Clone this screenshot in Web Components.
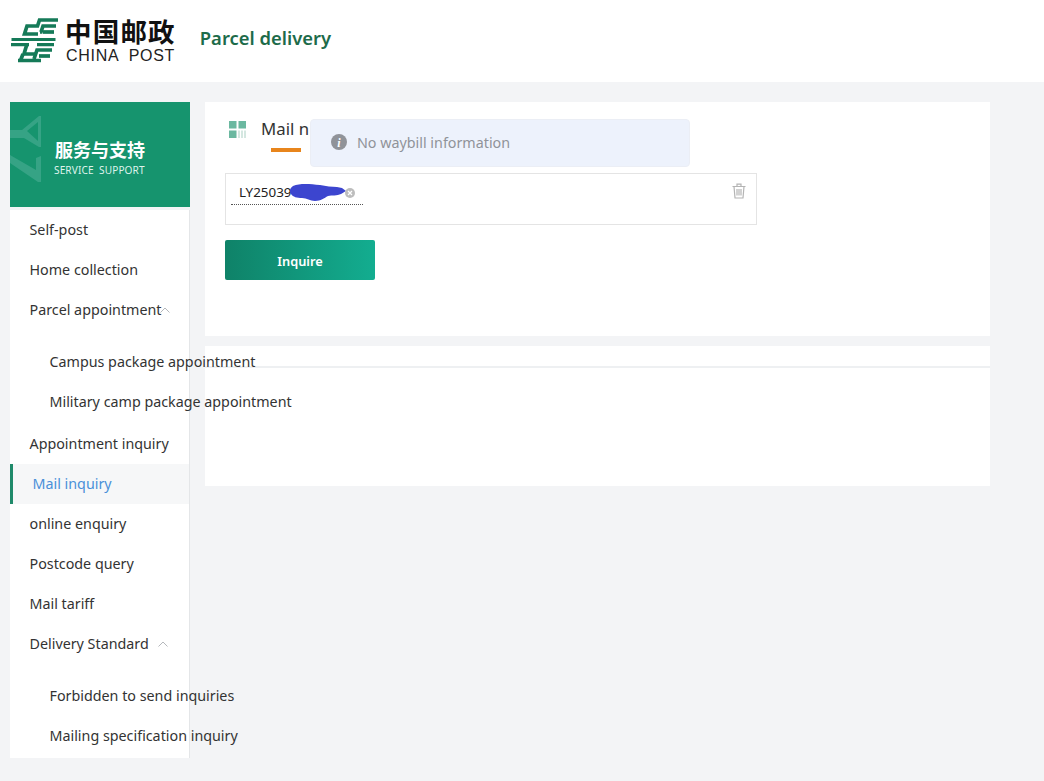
<!DOCTYPE html>
<html>
<head>
<title>Parcel delivery</title>
<style>
    html, body { margin: 0; padding: 0; }
    body {
        background: #f3f4f6;
        font-family: "Noto Sans", "Noto Sans CJK SC", sans-serif;
        color: #333;
        height: 781px;
        overflow: hidden;
    }
    .page {
        display: flex;
        gap: 15px;
        padding: 20px 54px 0 10px;
    }
</style>
</head>
<body>
<site-header></site-header>
<div class="page">
    <side-nav>
        <nav-item>Self-post</nav-item>
        <nav-item>Home collection</nav-item>
        <nav-item caret="tight">Parcel appointment</nav-item>
        <nav-group>
            <nav-item sub>Campus package appointment</nav-item>
            <nav-item sub>Military camp package appointment</nav-item>
        </nav-group>
        <nav-item>Appointment inquiry</nav-item>
        <nav-item active>Mail inquiry</nav-item>
        <nav-item>online enquiry</nav-item>
        <nav-item>Postcode query</nav-item>
        <nav-item>Mail tariff</nav-item>
        <nav-item caret="far">Delivery Standard</nav-item>
        <nav-group>
            <nav-item sub>Forbidden to send inquiries</nav-item>
            <nav-item sub>Mailing specification inquiry</nav-item>
        </nav-group>
    </side-nav>
    <query-panel></query-panel>
</div>
<toast-message>No waybill information</toast-message>

<template id="site-header-tpl">
    <style>
        :host { display: flex; align-items: center; height: 82px; background: #fff; padding-left: 11px; box-sizing: border-box; }
        svg { display: block; margin-bottom: 2px; }
        .brand { margin-left: 7px; display: flex; flex-direction: column; color: #111; }
        .cn { font: 700 26.5px/26px "Noto Sans CJK SC", sans-serif; letter-spacing: 1.2px; margin-left: -1px; white-space: nowrap; }
        .en { font: 400 16px/16px "Liberation Sans", sans-serif; letter-spacing: 0.7px; white-space: pre; margin-top: 4px; color: #222; }
        .title { margin-left: 24px; margin-bottom: 8px; font-size: 18.4px; font-weight: 600; color: #1d6b4a; white-space: nowrap; }
    </style>
    <svg width="48" height="45" viewBox="0 0 48 45" fill="none" stroke="#157a58" stroke-width="3.7">
        <path d="M47 2 H28.5 L26.5 8 H16 L13.5 16 H27"/>
        <path d="M45 8 H32 L30 14 H29"/>
        <path d="M43 14 H32"/>
        <path d="M0.5 21.5 H44.5" stroke-width="3.2"/>
        <path d="M0 26.7 H18 M26 26.7 H43" stroke-width="3.2"/>
        <path d="M16 26 L13 36 H24 M7 42.5 H30"/>
        <path d="M41 32 H26 L23 41 M12 36 L9.5 42.5"/>
        <path d="M39 38 H28"/>
    </svg>
    <div class="brand">
        <span class="cn">中国邮政</span>
        <span class="en">CHINA  POST</span>
    </div>
    <div class="title">Parcel delivery</div>
</template>

<template id="side-nav-tpl">
    <style>
        :host { display: block; width: 180px; flex: none; position: relative; z-index: 2; }
        .banner {
            height: 105px;
            background: #16946e;
            color: #fff;
            position: relative;
            overflow: hidden;
            display: flex;
            flex-direction: column;
            justify-content: center;
            padding: 5px 0 0 45px;
            box-sizing: border-box;
        }
        .mark { position: absolute; left: 0; top: 14px; }
        .cn { font: 700 18px/24px "Noto Sans CJK SC", sans-serif; position: relative; }
        .en { font-size: 10.1px; line-height: 14px; letter-spacing: 0.1px; margin-left: -1px; color: #dff3ec; white-space: pre; position: relative; margin-top: 2px; }
        .menu {
            margin-top: 3px;
            height: 548px;
            background: #fff;
            border-right: 1px solid #e4e6e8;
            box-sizing: border-box;
        }
    </style>
    <div class="banner">
        <svg class="mark" width="32" height="70" viewBox="0 0 32 70" fill="#36a385">
            <!-- a Y and a Z turned on their side -->
            <polygon points="0,14 12,14 29,0 31,0 31,31 29,31 14,22 0,22"/>
            <polygon points="17,15 28,6 28,25" fill="#16946e"/>
            <polygon points="0,39 26,54 26,42 31,40 31,66 28,66 0,47"/>
        </svg>
        <div class="cn">服务与支持</div>
        <div class="en">SERVICE  SUPPORT</div>
    </div>
    <div class="menu"><slot></slot></div>
</template>

<template id="nav-item-tpl">
    <style>
        :host { display: block; height: 40px; line-height: 40px; font-size: 14.3px; color: #333; white-space: nowrap; position: relative; padding-left: 19.5px; box-sizing: border-box; }
        :host([sub]) { padding-left: 39.5px; }
        :host([active]) { background: #f6f7f8; color: #4a90d9; border-left: 3px solid #1f8a6a; }
        svg { position: absolute; top: 16px; }
        :host([caret="tight"]) svg { left: 149px; }
        :host([caret="far"]) svg { left: 147px; }
    </style>
    <slot></slot>
    <svg id="caret" width="12" height="8" viewBox="0 0 12 8" fill="none" stroke="#b5b8bc" stroke-width="1"><path d="M1.5 6.5 L6 2 L10.5 6.5"/></svg>
</template>

<template id="nav-group-tpl">
    <style>
        :host { display: block; padding: 12px 0 2px; }
    </style>
    <slot></slot>
</template>

<template id="query-panel-tpl">
    <style>
        :host { display: flex; flex-direction: column; gap: 10px; flex: 1; min-width: 0; }
        .card { background: #fff; }
        .form { height: 234px; padding: 0 20px; box-sizing: border-box; }
        .tabs { display: flex; height: 71px; align-items: flex-start; }
        .qr { margin: 19px 0 0 4px; display: block; flex: none; }
        .tab { margin-left: 15px; padding-top: 15px; font-size: 16.8px; line-height: 24px; color: #333; position: relative; white-space: nowrap; width: 48px; }
        .tab::after { content: ""; position: absolute; left: 10px; top: 46px; width: 30px; height: 4px; background: #e8851c; }
        .box { width: 532px; height: 52px; border: 1px solid #e4e4e4; box-sizing: border-box; position: relative; padding: 6px 5px; }
        .code { display: inline-block; width: 132px; height: 24px; line-height: 22px; font-size: 13.4px; color: #222; padding-left: 8px; box-sizing: border-box; border-bottom: 1px dotted #555; position: relative; white-space: nowrap; }
        .scribble { position: absolute; left: 59px; top: 3px; }
        .clear { position: absolute; left: 113px; top: 6px; }
        .trash { position: absolute; right: 10px; top: 9px; }
        .btn { display: block; margin-top: 15px; width: 150px; height: 40px; border: 0; border-radius: 2px; padding: 1px 0 0; color: #fff; font: 600 12.8px "Noto Sans", sans-serif; background: linear-gradient(90deg, #0f8268, #13ad90); }
        .result { height: 140px; }
        .result div { height: 20px; border-bottom: 2px solid #eef0f2; }
    </style>
    <div class="card form">
        <div class="tabs">
            <svg class="qr" width="17" height="17" viewBox="0 0 17 17">
                <rect x="0" y="0" width="7.5" height="7.5" fill="#6bb8a0"/>
                <rect x="9.5" y="0" width="7.5" height="7.5" fill="#6bb8a0"/>
                <rect x="0" y="9.5" width="7.5" height="7.5" fill="#6bb8a0"/>
                <path d="M10 9.5v7.5M13 9.5v7.5M16 9.5v7.5" stroke="#a9cfc2" stroke-width="1" fill="none"/>
            </svg>
            <div class="tab">Mail n</div>
        </div>
        <div class="box">
            <span class="code">LY25039
                <svg class="scribble" width="56" height="18" viewBox="0 0 56 18"><path d="M3 2 C10 -1 20 0 30 1 C36 2 42 3 47 3 L52 4 L56 7 L51 10 C47 12 42 11 38 12 C34 14 31 17 25 17 C20 17 17 14 12 14 C7 14 3 13 1 10 C-1 7 0 4 3 2 Z" fill="#3c45cf"/></svg>
                <svg class="clear" width="12" height="12" viewBox="0 0 12 12"><circle cx="6" cy="6" r="5" fill="#bdbdbd"/><path d="M4 4l4 4M8 4l-4 4" stroke="#fff" stroke-width="1.2"/></svg>
            </span>
            <svg class="trash" width="14" height="16" viewBox="0 0 14 16" fill="none" stroke="#b4b4b4" stroke-width="1.2">
                <path d="M0.5 3.5H13.5M5 3V1.2H9V3M2 3.5L3 15H11L12 3.5"/>
                <path d="M5 6v6.5M7 6v6.5M9 6v6.5"/>
            </svg>
        </div>
        <button class="btn">Inquire</button>
    </div>
    <div class="card result"><div></div></div>
</template>

<template id="toast-message-tpl">
    <style>
        :host { position: fixed; left: 310px; top: 119px; width: 380px; height: 48px; box-sizing: border-box; background: #edf2fc; border: 1px solid #ebeef5; border-radius: 4px; display: flex; align-items: center; padding: 0 0 2px 20px; font-size: 14.3px; color: #909399; z-index: 5; }
        svg { margin-right: 10px; flex: none; }
    </style>
    <svg width="16" height="16" viewBox="0 0 16 16"><circle cx="8" cy="8" r="8" fill="#909399"/><text x="8" y="12.5" text-anchor="middle" font-family="Liberation Serif, serif" font-style="italic" font-weight="700" font-size="12" fill="#fff">i</text></svg>
    <slot></slot>
</template>

<script>
    // every element is just its template in an open shadow root
    function register(name) {
        customElements.define(name, class extends HTMLElement {
            constructor() {
                super();
                this.attachShadow({ mode: 'open' });
                this.shadowRoot.appendChild(document.getElementById(name + '-tpl').content.cloneNode(true));
            }

            connectedCallback() {
                const caret = this.shadowRoot.getElementById('caret');
                if (caret && !this.hasAttribute('caret')) caret.remove();
            }
        });
    }

    ['site-header', 'side-nav', 'nav-item', 'nav-group', 'query-panel', 'toast-message'].forEach(register);
</script>
</body>
</html>
